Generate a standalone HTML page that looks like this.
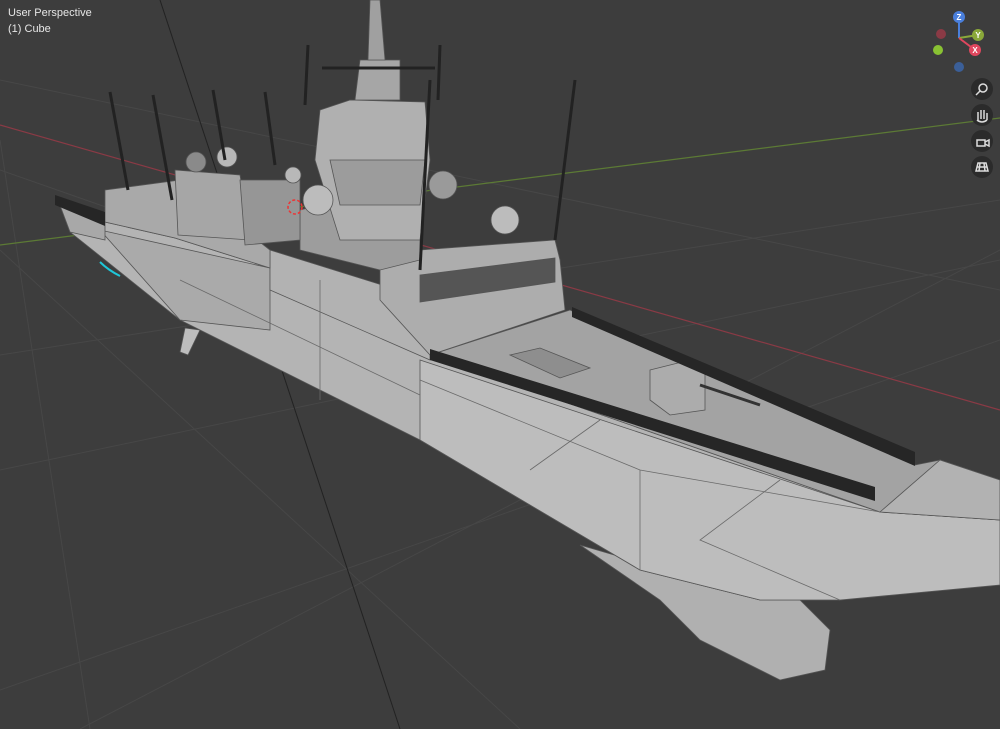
<!DOCTYPE html>
<html><head><meta charset="utf-8"><style>
html,body{margin:0;padding:0;background:#3d3d3d;width:1000px;height:729px;overflow:hidden}
.t{position:absolute;left:8px;color:#e6e6e6;font:11px "Liberation Sans",sans-serif}
</style></head><body>
<svg width="1000" height="729" style="position:absolute;left:0;top:0">
<rect width="1000" height="729" fill="#3d3d3d"/>
<g stroke="#474747" stroke-width="1" fill="none">
<line x1="0" y1="355" x2="1000" y2="200"/>
<line x1="0" y1="470" x2="1000" y2="260"/>
<line x1="0" y1="690" x2="1000" y2="340"/>
<line x1="0" y1="170" x2="1000" y2="520"/>
<line x1="0" y1="250" x2="520" y2="729"/>
<line x1="80" y1="729" x2="1000" y2="250"/>
<line x1="0" y1="80" x2="1000" y2="290"/>
<line x1="0" y1="140" x2="90" y2="729"/>
</g>
<line x1="160" y1="0" x2="400" y2="729" stroke="#222" stroke-width="1"/>
<line x1="0" y1="125" x2="1000" y2="410" stroke="#8a3a45" stroke-width="1.2"/>
<line x1="0" y1="245" x2="1000" y2="118" stroke="#5c7a35" stroke-width="1.2"/>
<g stroke="#555" stroke-width="0.8">
<path d="M185 328 L200 330 L188 355 L180 352 Z" fill="#bdbdbd"/>
<path d="M580 545 L660 600 L700 640 L780 680 L825 670 L830 630 L800 600 L700 580 Z" fill="#b0b0b0"/>
<path d="M58 200 L105 222 L175 238 L270 268 L430 355 L880 512 L1000 520 L1000 585 L840 600 L760 600 L640 570 L420 440 L180 320 L70 232 Z" fill="#b4b4b4"/>
<path d="M420 360 L880 512 L1000 520 L1000 585 L840 600 L760 600 L640 570 L420 440 Z" fill="#bdbdbd"/>
<path d="M100 230 L270 268 L270 330 L180 320 Z" fill="#aaaaaa"/>
<path d="M58 200 L105 215 L105 240 L70 232 Z" fill="#a8a8a8"/>
<path d="M430 355 L570 310 L915 465 L940 460 L1000 480 L1000 520 L880 512 Z" fill="#a3a3a3"/>
<path d="M880 512 L940 460 L1000 480 L1000 520 Z" fill="#b2b2b2"/>
<path d="M270 250 L430 300 L430 360 L270 290 Z" fill="#b2b2b2"/>
<path d="M105 190 L180 180 L270 250 L270 268 L175 238 L105 222 Z" fill="#a9a9a9"/>
<path d="M380 265 L420 250 L555 240 L560 260 L565 310 L430 355 L380 300 Z" fill="#adadad"/>
<path d="M420 275 L555 258 L555 282 L420 302 Z" fill="#555"/>
<path d="M300 210 L340 200 L380 205 L420 220 L420 260 L380 270 L300 250 Z" fill="#9d9d9d"/>
<path d="M175 170 L240 175 L250 240 L178 235 Z" fill="#a6a6a6"/>
<path d="M240 180 L300 180 L300 240 L245 245 Z" fill="#969696"/>
<path d="M320 110 L350 100 L425 102 L430 160 L420 240 L340 240 L315 160 Z" fill="#b0b0b0"/>
<path d="M330 160 L425 160 L420 205 L340 205 Z" fill="#9c9c9c"/>
<path d="M360 60 L400 60 L400 100 L355 100 Z" fill="#a6a6a6"/>
<path d="M370 0 L380 0 L385 60 L368 60 Z" fill="#a0a0a0"/>
<circle cx="318" cy="200" r="15" fill="#bcbcbc"/>
<circle cx="505" cy="220" r="14" fill="#bcbcbc"/>
<circle cx="227" cy="157" r="10" fill="#b8b8b8"/>
<circle cx="293" cy="175" r="8" fill="#b8b8b8"/>
<circle cx="443" cy="185" r="14" fill="#9a9a9a"/>
<circle cx="196" cy="162" r="10" fill="#8a8a8a"/>
<path d="M650 370 L690 360 L705 370 L705 410 L670 415 L650 400 Z" fill="#acacac"/>
<line x1="700" y1="385" x2="760" y2="405" stroke="#333" stroke-width="3"/>
<path d="M510 355 L540 348 L590 368 L560 378 Z" fill="#8e8e8e"/>
</g>
<g stroke="#6a6a6a" stroke-width="0.8" fill="none">
<path d="M420 380 L640 470 L880 512"/><path d="M640 470 L640 570"/><path d="M530 470 L600 420"/>
<path d="M180 280 L420 395"/><path d="M320 280 L320 400"/><path d="M780 480 L700 540 L840 600"/>
</g>
<g fill="#262626">
<path d="M430 349 L875 487 L875 501 L430 360 Z"/>
<path d="M572 307 L915 452 L915 466 L572 317 Z"/>
<path d="M55 195 L105 212 L105 226 L55 205 Z"/>
</g>
<g stroke="#222" stroke-width="3">
<line x1="110" y1="92" x2="128" y2="190"/><line x1="153" y1="95" x2="172" y2="200"/>
<line x1="213" y1="90" x2="225" y2="160"/><line x1="265" y1="92" x2="275" y2="165"/>
<line x1="308" y1="45" x2="305" y2="105"/><line x1="575" y1="80" x2="555" y2="240"/>
<line x1="430" y1="80" x2="420" y2="270"/><line x1="440" y1="45" x2="438" y2="100"/>
<line x1="322" y1="68" x2="435" y2="68"/>
</g>
<path d="M100 262 q8 8 20 14" stroke="#1fc6d8" stroke-width="2" fill="none"/>
<circle cx="295" cy="207" r="7" fill="none" stroke="#e33" stroke-dasharray="3 2" stroke-width="1.5"/>
<g>
<line x1="959" y1="38" x2="959" y2="17" stroke="#4a7fdc" stroke-width="2"/>
<line x1="959" y1="38" x2="978" y2="35" stroke="#8aa83a" stroke-width="2"/>
<line x1="959" y1="38" x2="975" y2="50" stroke="#e0475e" stroke-width="2"/>
<circle cx="959" cy="17" r="6" fill="#4a7fdc"/><circle cx="978" cy="35" r="6" fill="#8aa83a"/>
<circle cx="975" cy="50" r="6" fill="#e0475e"/><circle cx="941" cy="34" r="5" fill="#8a3a45"/>
<circle cx="938" cy="50" r="5" fill="#89c233"/><circle cx="959" cy="67" r="5" fill="#3b5f98"/>
<g fill="#fff" font-size="8" font-family="Liberation Sans" text-anchor="middle" font-weight="bold">
<text x="959" y="20">Z</text><text x="978" y="38">Y</text><text x="975" y="53">X</text></g>
</g>
<g fill="#2b2b2b">
<circle cx="982" cy="89" r="11"/><circle cx="982" cy="115" r="11"/>
<circle cx="982" cy="141" r="11"/><circle cx="982" cy="167" r="11"/>
</g>
<g stroke="#ddd" fill="none" stroke-width="1.5">
<circle cx="983" cy="88" r="4"/><line x1="980" y1="91" x2="976" y2="95"/>
<path d="M978 120 l0 -8 M981 119 l0 -9 M984 119 l0 -9 M987 120 l0 -7 M977 120 q5 4 10 0"/>
<rect x="977" y="140" width="8" height="6"/><path d="M985 142 l4 -2 v6 l-4 -2"/>
<path d="M976 171 l12 0 l-2 -8 l-8 0 z M980 163 l-1 8 M984 163 l1 8 M977 167 h10"/>
</g>
</svg>
<div class="t" style="top:7px">User Perspective</div>
<div class="t" style="top:23px">(1) Cube</div>
</body></html>
